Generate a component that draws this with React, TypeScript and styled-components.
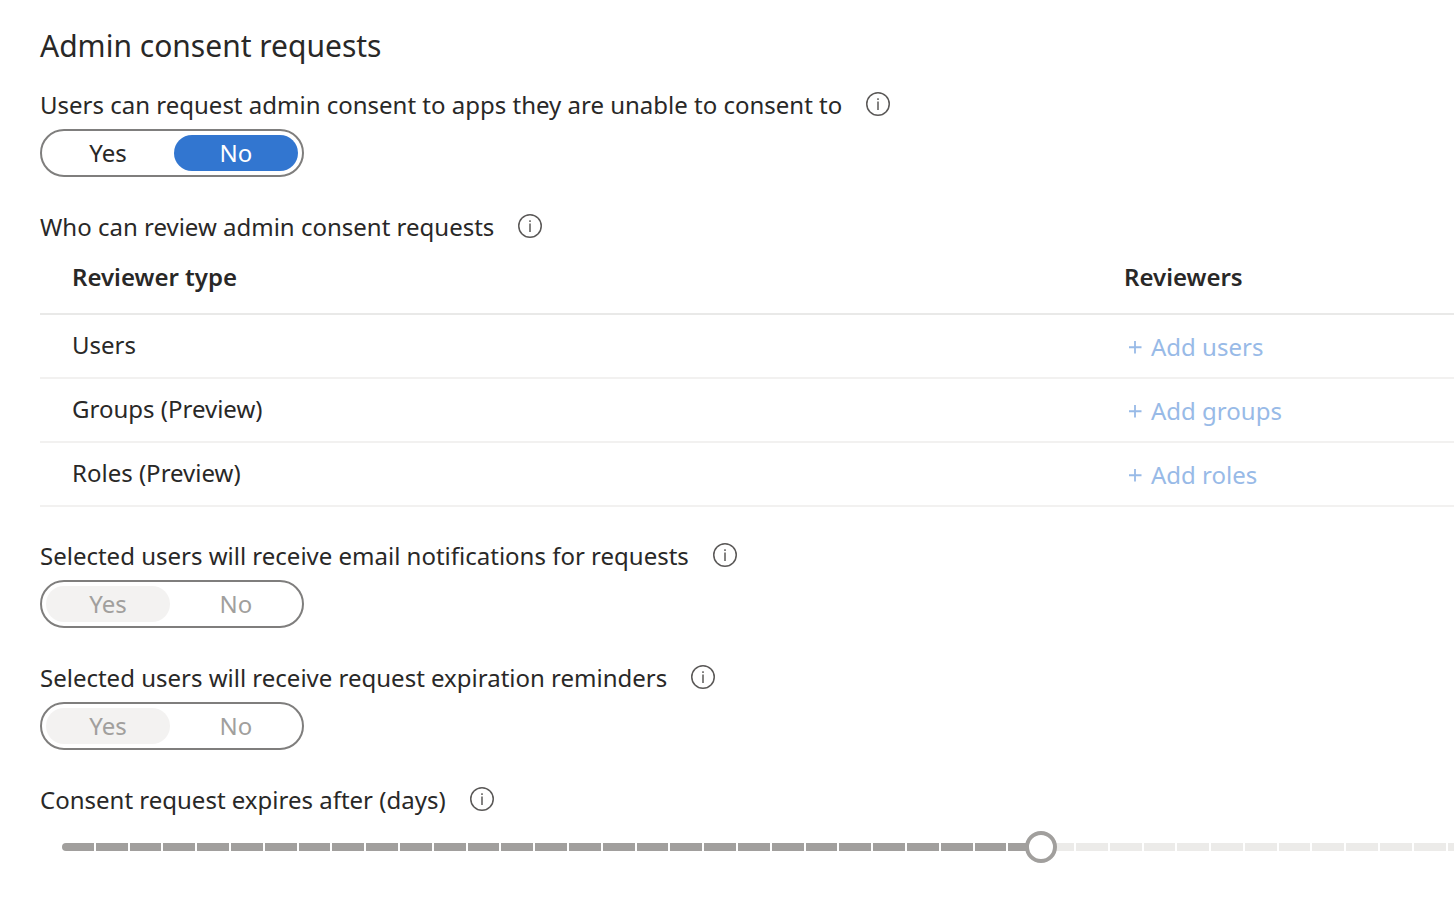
import React, { useState } from 'react';
import styled, { createGlobalStyle } from 'styled-components';

const GlobalStyle = createGlobalStyle`
  *, *::before, *::after { box-sizing: border-box; }
  body {
    margin: 0;
    background: #fff;
    color: #292827;
    font-family: 'Noto Sans', 'Open Sans', sans-serif;
    font-size: 24px;
    line-height: 36px;
  }
  #root { overflow-x: hidden; }
`;

const Page = styled.main`
  padding: 24px 0 40px 40px;
`;

const Title = styled.h2`
  margin: 0 0 19px;
  font-size: 30px;
  font-weight: 400;
  line-height: 44px;
`;

const Section = styled.section<{ $gap?: number }>`
  margin-bottom: ${(p) => p.$gap ?? 32}px;
`;

const LabelRow = styled.div`
  display: flex;
  align-items: center;
  gap: 24px;
`;

const InfoButton = styled.button`
  display: flex;
  padding: 0 0 2px;
  border: 0;
  background: none;
  color: #5a5857;
`;

const ToggleFrame = styled.div`
  display: inline-flex;
  gap: 4px;
  margin-top: 6px;
  padding: 4px;
  border: 2px solid #7f7e7d;
  border-radius: 24px;
  vertical-align: top;
`;

const Option = styled.label`
  width: 124px;
  border-radius: 18px;
  text-align: center;
  color: #292827;

  &:has(input:checked) { background: #3276d0; color: #fff; }
  &:has(input:disabled) { color: #a19f9d; }
  &:has(input:disabled:checked) { background: #f3f2f1; }
  &:has(input:focus-visible) { outline: 2px solid #292827; }
`;

const HiddenRadio = styled.input`
  position: absolute;
  opacity: 0;
  pointer-events: none;
`;

const Table = styled.table`
  width: 100%;
  table-layout: fixed;
  border-collapse: separate;
  border-spacing: 0;
  text-align: left;
`;

const HeadCell = styled.th<{ $wide?: boolean }>`
  width: ${(p) => (p.$wide ? '74.4%' : 'auto')};
  height: 70px;
  padding: 0 0 4px 32px;
  border-bottom: 2px solid #e9e9e8;
  font-weight: 600;
`;

const Cell = styled.td`
  height: 64px;
  padding: 0 0 2px 32px;
  border-bottom: 2px solid #f2f1f0;
`;

const AddButton = styled.button`
  display: flex;
  align-items: center;
  gap: 9px;
  padding: 4px 4px 0;
  border: 0;
  background: none;
  color: #98bae7;
  font: inherit;
`;

const SliderArea = styled.div`
  display: grid;
  align-items: center;
  margin-top: 13px;
  padding-left: 22px;
  overflow: hidden;
`;

const Track = styled.div`
  grid-area: 1 / 1;
  display: flex;
  width: 143.1%;
  height: 8px;
`;

const Step = styled.span<{ $filled: boolean }>`
  flex: 1;
  border: solid #fff;
  border-width: 0 1px;
  background: ${(p) => (p.$filled ? '#a19f9d' : '#ecebe9')};

  &:first-child { border-left: 0; border-radius: 4px 0 0 4px; }
  &:last-child { border-right: 0; border-radius: 0 4px 4px 0; }
`;

const Range = styled.input`
  grid-area: 1 / 1;
  appearance: none;
  width: calc(143.1% + 32px);
  height: 32px;
  margin: 0 0 0 -16px;
  background: transparent;

  &::-webkit-slider-thumb {
    appearance: none;
    width: 32px;
    height: 32px;
    border: 4px solid #a19f9d;
    border-radius: 50%;
    background: #fff;
  }
`;

function Info({ about }: { about: string }) {
  return (
    <InfoButton type="button" aria-label={`About: ${about}`}>
      <svg width="24" height="24" viewBox="0 0 24 24" fill="none" stroke="currentColor" strokeWidth="1.5">
        <circle cx="12" cy="12" r="11.25" />
        <path d="M12 9.5v8.5" />
        <path d="M12 6.2v1.8" />
      </svg>
    </InfoButton>
  );
}

function Toggle({ id, label, initial, disabled }: { id: string; label: string; initial: string; disabled?: boolean }) {
  const [value, setValue] = useState(initial);
  return (
    <Section>
      <LabelRow>
        <span id={id}>{label}</span>
        <Info about={label} />
      </LabelRow>
      <ToggleFrame role="radiogroup" aria-labelledby={id}>
        {['Yes', 'No'].map((option) => (
          <Option key={option}>
            <HiddenRadio
              type="radio"
              name={id}
              checked={value === option}
              disabled={disabled}
              onChange={() => setValue(option)}
            />
            {option}
          </Option>
        ))}
      </ToggleFrame>
    </Section>
  );
}

const reviewers = [
  { type: 'Users', action: 'Add users' },
  { type: 'Groups (Preview)', action: 'Add groups' },
  { type: 'Roles (Preview)', action: 'Add roles' },
];

const MAX_DAYS = 60;

export default function App() {
  const [days, setDays] = useState(30);
  return (
    <Page>
      <GlobalStyle />
      <Title>Admin consent requests</Title>
      <Toggle id="can-request" label="Users can request admin consent to apps they are unable to consent to" initial="No" />
      <Section $gap={31}>
        <LabelRow>
          <span id="reviewers">Who can review admin consent requests</span>
          <Info about="Who can review admin consent requests" />
        </LabelRow>
        <Table aria-labelledby="reviewers">
          <thead>
            <tr>
              <HeadCell $wide>Reviewer type</HeadCell>
              <HeadCell>Reviewers</HeadCell>
            </tr>
          </thead>
          <tbody>
            {reviewers.map(({ type, action }) => (
              <tr key={type}>
                <Cell>{type}</Cell>
                <Cell>
                  <AddButton type="button" disabled>
                    <svg width="14" height="14" viewBox="0 0 14 14" stroke="currentColor" strokeWidth="1.8">
                      <path d="M7 1v12.5M1 7.25h12.5" />
                    </svg>
                    {action}
                  </AddButton>
                </Cell>
              </tr>
            ))}
          </tbody>
        </Table>
      </Section>
      <Toggle id="email" label="Selected users will receive email notifications for requests" initial="Yes" disabled />
      <Toggle id="reminders" label="Selected users will receive request expiration reminders" initial="Yes" disabled />
      <LabelRow>
        <label htmlFor="expiry">Consent request expires after (days)</label>
        <Info about="Consent request expires after (days)" />
      </LabelRow>
      <SliderArea>
        <Track>
          {Array.from({ length: MAX_DAYS - 1 }, (_, i) => (
            <Step key={i} $filled={i < days - 1} />
          ))}
        </Track>
        <Range
          id="expiry"
          type="range"
          min={1}
          max={MAX_DAYS}
          value={days}
          disabled
          onChange={(e) => setDays(Number(e.target.value))}
        />
      </SliderArea>
    </Page>
  );
}
